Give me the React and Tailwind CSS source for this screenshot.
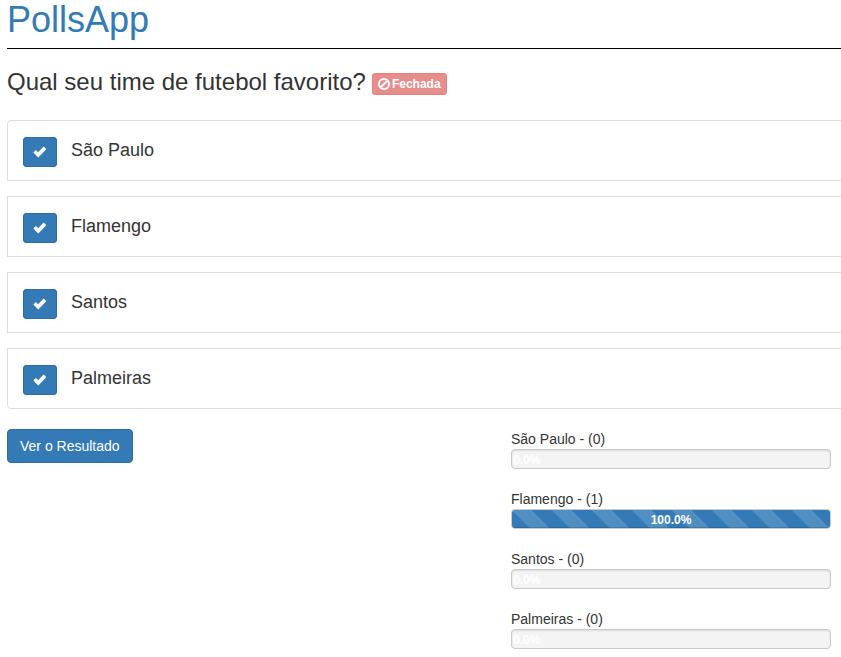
const options = [
  { name: "São Paulo", votes: 0, percent: 0 },
  { name: "Flamengo", votes: 1, percent: 100 },
  { name: "Santos", votes: 0, percent: 0 },
  { name: "Palmeiras", votes: 0, percent: 0 },
];

function CheckIcon() {
  return (
    <svg width="14" height="12" viewBox="0 0 14 12" fill="#fff" aria-hidden="true">
      <path d="M0.6 6.2 L2.5 4.2 Q2.8 3.9 3.1 4.2 L5.2 6.2 L10.3 0.8 Q10.6 0.5 10.9 0.8 L13 2.8 Q13.3 3.1 13 3.4 L5.5 11.3 Q5.2 11.6 4.9 11.3 L0.6 6.8 Q0.3 6.5 0.6 6.2 Z" />
    </svg>
  );
}

function BanIcon() {
  return (
    <svg width="12" height="12" viewBox="0 0 12 12" fill="none" stroke="#fff" strokeWidth="2" aria-hidden="true">
      <circle cx="6" cy="6" r="5" />
      <path d="M2.6 9.4 L9.4 2.6" />
    </svg>
  );
}

function Option({ name }) {
  return (
    <li className="flex items-start gap-[14px] border border-[#ddd] bg-white px-[15px] pt-4 pb-[13px] first:rounded-t-sm last:rounded-b-sm">
      <button
        type="button"
        aria-label={`Votar em ${name}`}
        className="flex h-[30px] w-[34px] items-center justify-center rounded-[3px] border border-[#2e6da4] bg-[#337ab7]"
      >
        <CheckIcon />
      </button>
      <h4 className="pt-[3px] text-[18px] leading-5">{name}</h4>
    </li>
  );
}

function Result({ name, votes, percent }) {
  return (
    <div>
      <p className="leading-5">
        {name} - ({votes})
      </p>
      <div
        role="progressbar"
        aria-label={name}
        aria-valuenow={percent}
        aria-valuemin={0}
        aria-valuemax={100}
        className="h-5 overflow-hidden rounded-sm border border-[#c9c9c9] bg-[#f4f4f4] shadow-[inset_0_1px_2px_rgba(0,0,0,0.1)]"
      >
        <div
          className={`h-full text-center text-[12px] leading-5 font-bold text-white ${
            percent > 0
              ? "bg-[#337ab7] bg-[linear-gradient(45deg,rgba(255,255,255,.15)_25%,transparent_25%,transparent_50%,rgba(255,255,255,.15)_50%,rgba(255,255,255,.15)_75%,transparent_75%,transparent)] bg-[length:40px_40px] shadow-[inset_0_-1px_0_rgba(0,0,0,0.15)]"
              : "pl-px"
          }`}
          style={{ width: `${percent}%` }}
        >
          {percent.toFixed(1)}%
        </div>
      </div>
    </div>
  );
}

export default function App() {
  return (
    <main className="overflow-hidden bg-white pl-[7px] font-['Liberation_Sans',Arial,sans-serif] text-[14px] text-[#333]">
      <header className="border-b border-black pb-2">
        <h1 className="text-[36px] leading-10">
          <a href="#" className="text-[#337ab7]">PollsApp</a>
        </h1>
      </header>

      <div className="mt-5 flex gap-[6px]">
        <h3 className="text-[24px] leading-[26px]">Qual seu time de futebol favorito?</h3>
        <button
          type="button"
          disabled
          className="mt-1 flex h-[22px] items-center gap-[2px] rounded-[3px] border border-[#d43f3a] bg-[#d9534f] px-[5px] text-[12px] leading-[18px] font-bold text-white opacity-65"
        >
          <BanIcon />
          Fechada
        </button>
      </div>

      <ul className="mt-[25px] -mr-[15px] flex flex-col gap-[15px]">
        {options.map((option) => (
          <Option key={option.name} name={option.name} />
        ))}
      </ul>

      <div className="mt-5 flex items-start justify-between pr-[10px] pb-2">
        <button
          type="button"
          className="rounded-sm border border-[#2e6da4] bg-[#337ab7] px-3 py-[6px] leading-5 text-white"
        >
          Ver o Resultado
        </button>
        <section aria-label="Resultado" className="flex w-[320px] flex-col gap-5">
          {options.map((option) => (
            <Result key={option.name} {...option} />
          ))}
        </section>
      </div>
    </main>
  );
}
